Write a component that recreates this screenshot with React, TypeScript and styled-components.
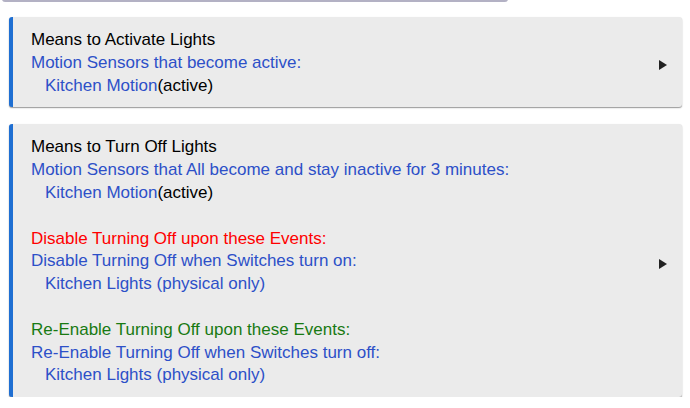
import React from 'react';
import styled, { createGlobalStyle } from 'styled-components';

const GlobalStyle = createGlobalStyle`
   body {
      margin: 0;
      background: #ffffff;
      font-family: 'Liberation Sans', Arial, sans-serif;
   }
`;

const Page = styled.div`
   display: flex;
   flex-direction: column;
   gap: 17px;
   padding: 0 8px 0 9px;
`;

const TopEdge = styled.div`
   width: 506px;
   height: 3px;
   margin: -1px 0 -2px -7px;
   border-radius: 0 0 4px 4px;
   background: #dcdbe3;
   border-bottom: 2px solid #b3b1c4;
   box-sizing: border-box;
`;

const Card = styled.div`
   display: flex;
   align-items: center;
   background: #ebebeb;
   border-left: 4px solid #1f6fd2;
   border-radius: 3px;
   box-shadow: 0 1px 1px rgba(0, 0, 0, 0.3), 0 1px 2px rgba(0, 0, 0, 0.15);
   padding: 12px 15px 10px 18px;
`;

const Body = styled.div`
   flex: 1;
   font-size: 17px;
   line-height: 22.8px;
`;

const Line = styled.div<{ $tone?: 'title' | 'link' | 'warn' | 'ok'; $indent?: boolean }>`
   min-height: 22.8px;
   white-space: nowrap;
   padding-left: ${(p) => (p.$indent ? '14px' : '0')};
   color: ${(p) =>
      p.$tone === 'link' ? '#2d50c8' : p.$tone === 'warn' ? '#ff0000' : p.$tone === 'ok' ? '#187a12' : '#000000'};
`;

const Plain = styled.span`
   color: #000000;
`;

const Arrow = styled.svg`
   flex: none;
   width: 8px;
   height: 10px;
   margin-top: 4px;
`;

const Caret = () => (
   <Arrow viewBox='0 0 8 10'>
      <polygon points='0,0 8,5 0,10' fill='#222222' />
   </Arrow>
);

const App = () => {
   return (
      <>
         <GlobalStyle />
         <Page>
            <TopEdge />
            <Card>
               <Body>
                  <Line $tone='title'>Means to Activate Lights</Line>
                  <Line $tone='link'>Motion Sensors that become active:</Line>
                  <Line $tone='link' $indent>
                     Kitchen Motion<Plain>(active)</Plain>
                  </Line>
               </Body>
               <Caret />
            </Card>
            <Card>
               <Body>
                  <Line $tone='title'>Means to Turn Off Lights</Line>
                  <Line $tone='link'>Motion Sensors that All become and stay inactive for 3 minutes:</Line>
                  <Line $tone='link' $indent>
                     Kitchen Motion<Plain>(active)</Plain>
                  </Line>
                  <Line />
                  <Line $tone='warn'>Disable Turning Off upon these Events:</Line>
                  <Line $tone='link'>Disable Turning Off when Switches turn on:</Line>
                  <Line $tone='link' $indent>
                     Kitchen Lights (physical only)
                  </Line>
                  <Line />
                  <Line $tone='ok'>Re-Enable Turning Off upon these Events:</Line>
                  <Line $tone='link'>Re-Enable Turning Off when Switches turn off:</Line>
                  <Line $tone='link' $indent>
                     Kitchen Lights (physical only)
                  </Line>
               </Body>
               <Caret />
            </Card>
         </Page>
      </>
   );
};

export default App;
